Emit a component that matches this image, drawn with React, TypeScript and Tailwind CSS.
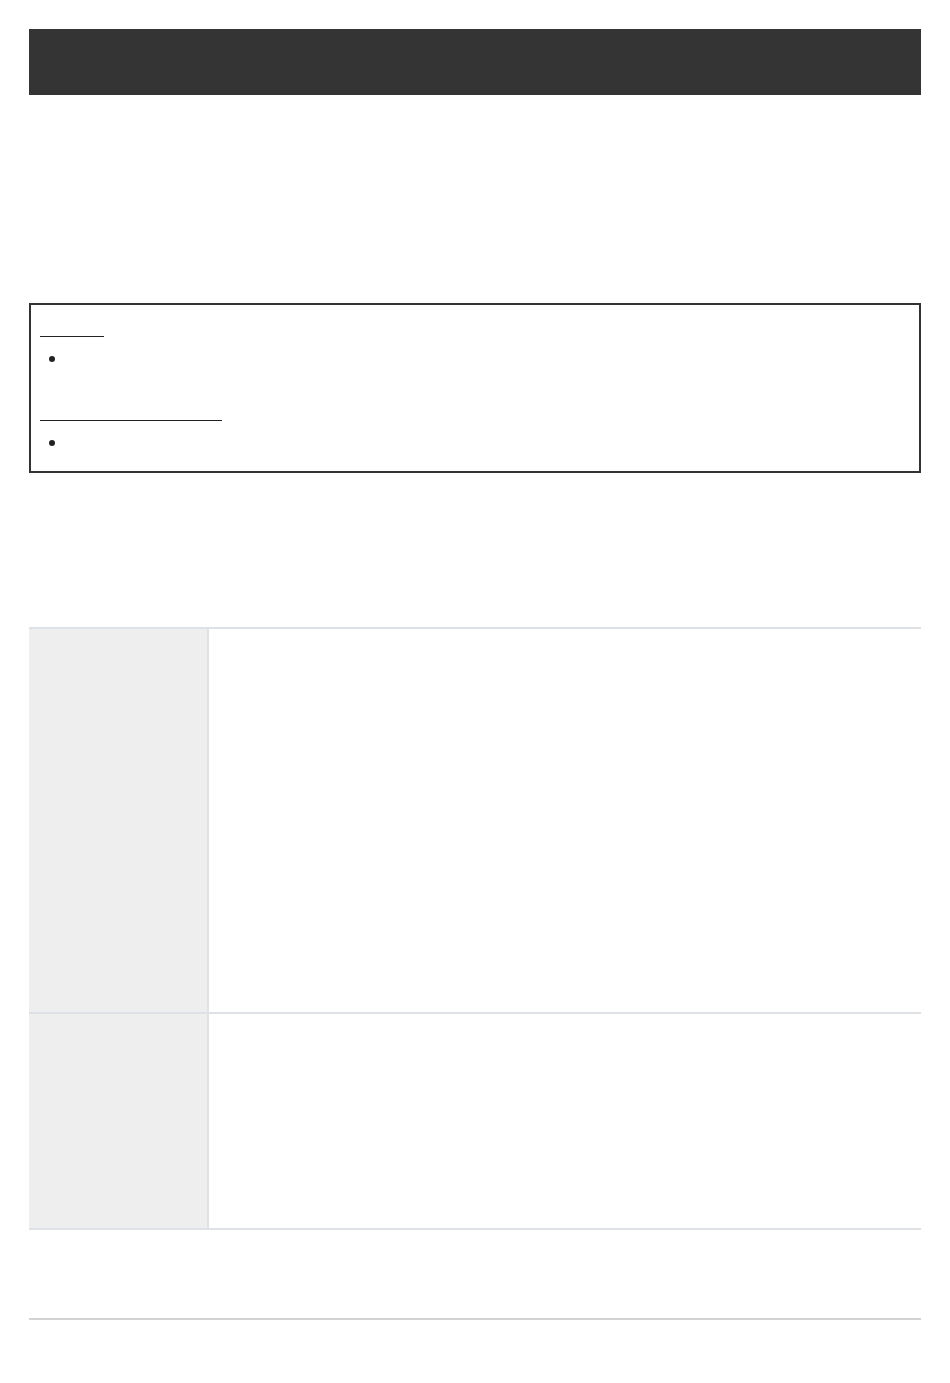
export default function App() {
  return (
    <div className="min-h-[1383px] bg-white px-[29px] pt-[29px]">
      {/* header bar */}
      <div className="h-[66px] w-full bg-[#343434]" />

      {/* notice box */}
      <div className="mt-[208px] h-[170px] border-2 border-[#333333] px-[9px] pt-[31px]">
        <div className="h-px w-[64px] bg-[#222222]" />
        <div className="ml-[9px] mt-[19px] h-[6px] w-[6px] rounded-full bg-[#222222]" />
        <div className="mt-[58px] h-px w-[182px] bg-[#222222]" />
        <div className="ml-[9px] mt-[19px] h-[6px] w-[6px] rounded-full bg-[#222222]" />
      </div>

      {/* table */}
      <div className="mt-[154px] border-t-2 border-[#dee2e6]">
        <div className="flex h-[385px] border-b-2 border-[#dee2e6]">
          <div className="w-[180px] border-r-2 border-[#dee2e6] bg-[#eeeeee]" />
          <div className="flex-1" />
        </div>
        <div className="flex h-[216px] border-b-2 border-[#dee2e6]">
          <div className="w-[180px] border-r-2 border-[#dee2e6] bg-[#eeeeee]" />
          <div className="flex-1" />
        </div>
      </div>

      {/* footer rule */}
      <div className="mt-[88px] h-[2px] w-full bg-[#d3d3d3]" />
    </div>
  );
}
